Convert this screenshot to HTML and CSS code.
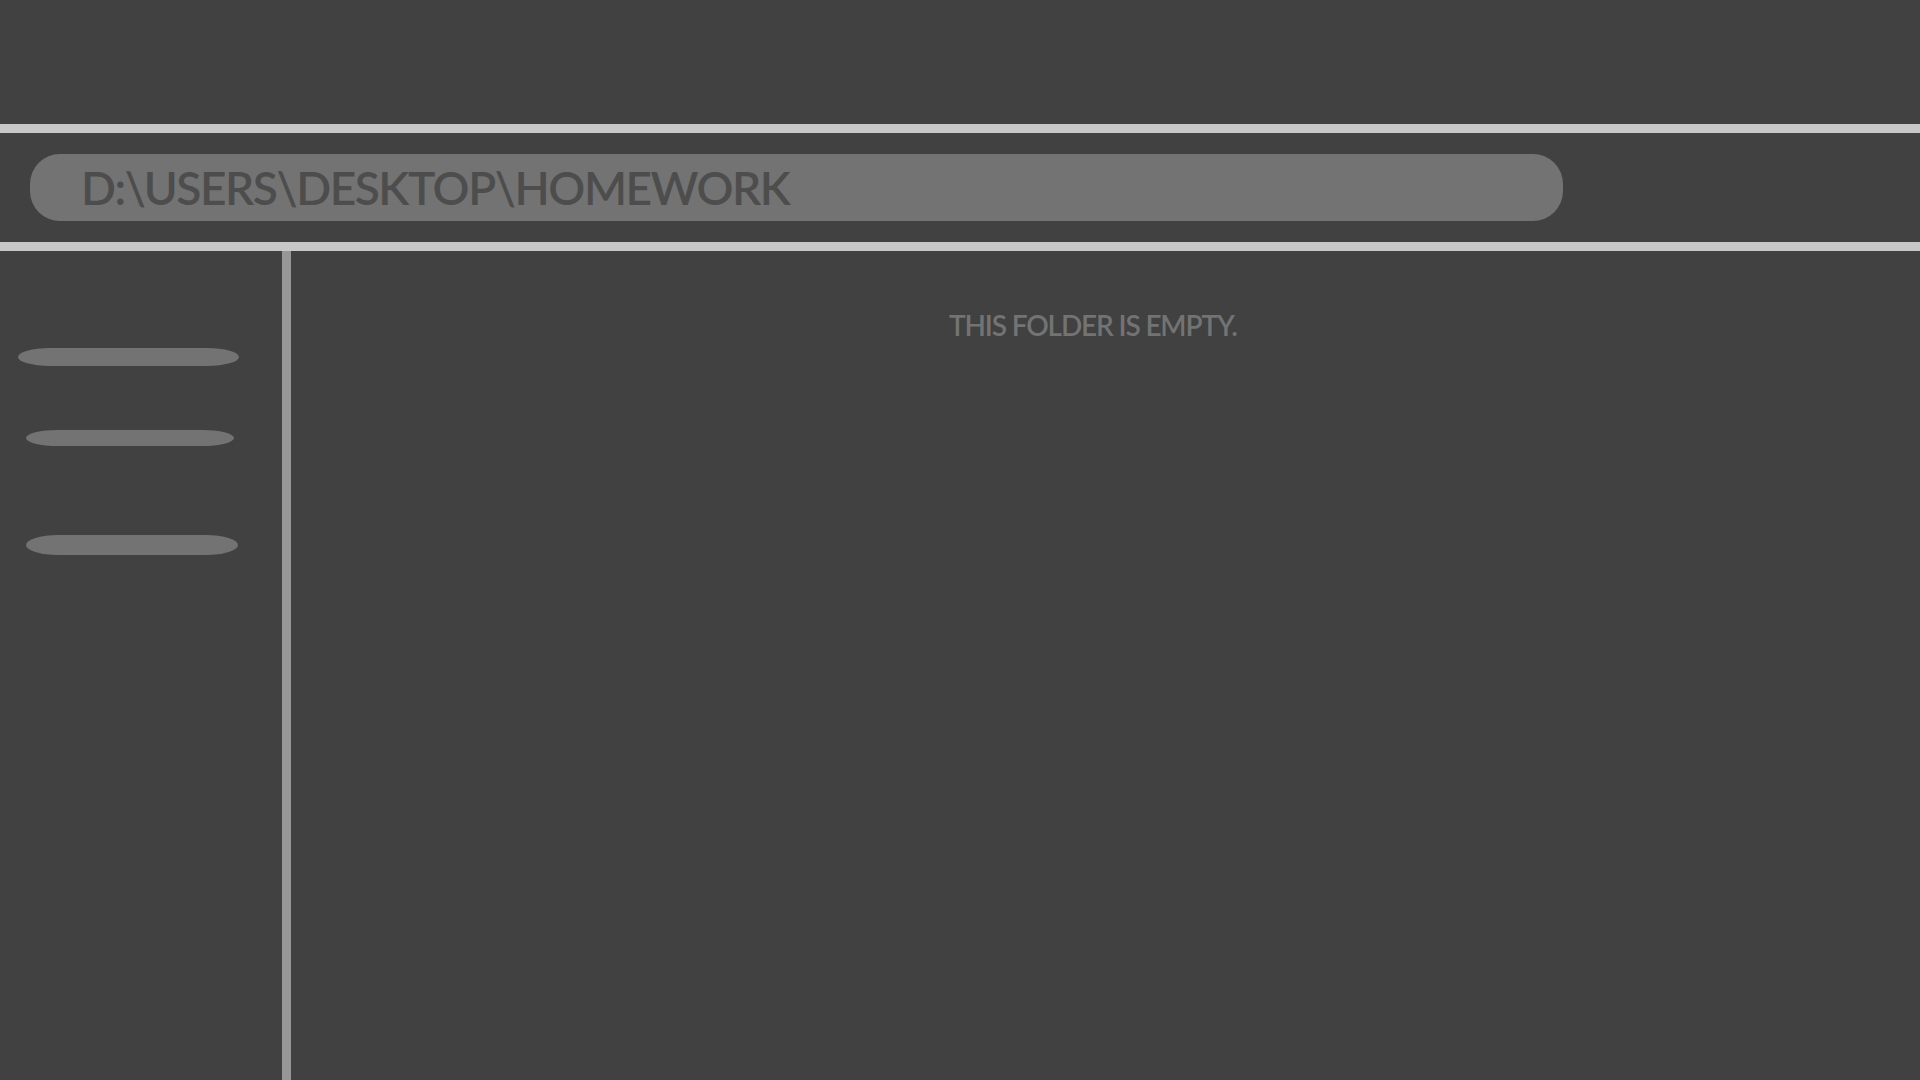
FILE: index.html
```html
<!DOCTYPE html>
<html lang="en">
<head>
<meta charset="utf-8">
<title>Explorer</title>
<link rel="stylesheet" href="styles.css">
</head>
<body>
<div class="app">
  <div class="top-space"></div>
  <div class="rule"></div>
  <div class="address-row">
    <div class="address-bar"><span class="path">D:\USERS\DESKTOP\HOMEWORK</span></div>
  </div>
  <div class="rule"></div>
  <div class="main">
    <aside class="sidebar">
      <div class="pill pill-1"></div>
      <div class="pill pill-2"></div>
      <div class="pill pill-3"></div>
    </aside>
    <div class="divider"></div>
    <section class="content">
      <p class="empty">THIS FOLDER IS EMPTY.</p>
    </section>
  </div>
</div>
</body>
</html>
```
FILE: styles.css
```css
html, body {
  margin: 0;
  padding: 0;
  width: 1920px;
  height: 1080px;
  overflow: hidden;
  background: #414141;
  font-family: "Lato", "Liberation Sans", sans-serif;
}
.app {
  display: flex;
  flex-direction: column;
  height: 1080px;
}
.top-space {
  height: 124px;
  flex: none;
}
.rule {
  height: 9px;
  background: #c8c8c8;
  flex: none;
}
.address-row {
  height: 109px;
  box-sizing: border-box;
  padding: 21px 0 21px 30px;
  flex: none;
}
.address-bar {
  width: 1533px;
  height: 67px;
  background: #737373;
  border-radius: 30px;
  box-sizing: border-box;
  padding-left: 51px;
  display: flex;
  align-items: center;
}
.path {
  font-size: 46px;
  font-weight: 600;
  letter-spacing: -1.45px;
  color: #4d4d4d;
  line-height: 1;
  white-space: nowrap;
}
.main {
  flex: 1;
  display: flex;
}
.sidebar {
  width: 282px;
  flex: none;
  display: flex;
  flex-direction: column;
  align-items: flex-start;
}
.pill {
  background: #737373;
  border-radius: 32px / 50%;
}
.pill-1 { margin: 97px 0 0 18px; width: 221px; height: 18px; }
.pill-2 { margin: 64px 0 0 26px; width: 208px; height: 16px; }
.pill-3 { margin: 89px 0 0 26px; width: 212px; height: 20px; }
.divider {
  width: 9px;
  background: #979797;
  flex: none;
}
.content {
  flex: 1;
  padding-left: 658px;
}
.empty {
  margin: 60px 0 0;
  font-size: 28px;
  font-weight: 600;
  letter-spacing: -1.15px;
  color: #737373;
  line-height: 1;
  white-space: nowrap;
}
```
